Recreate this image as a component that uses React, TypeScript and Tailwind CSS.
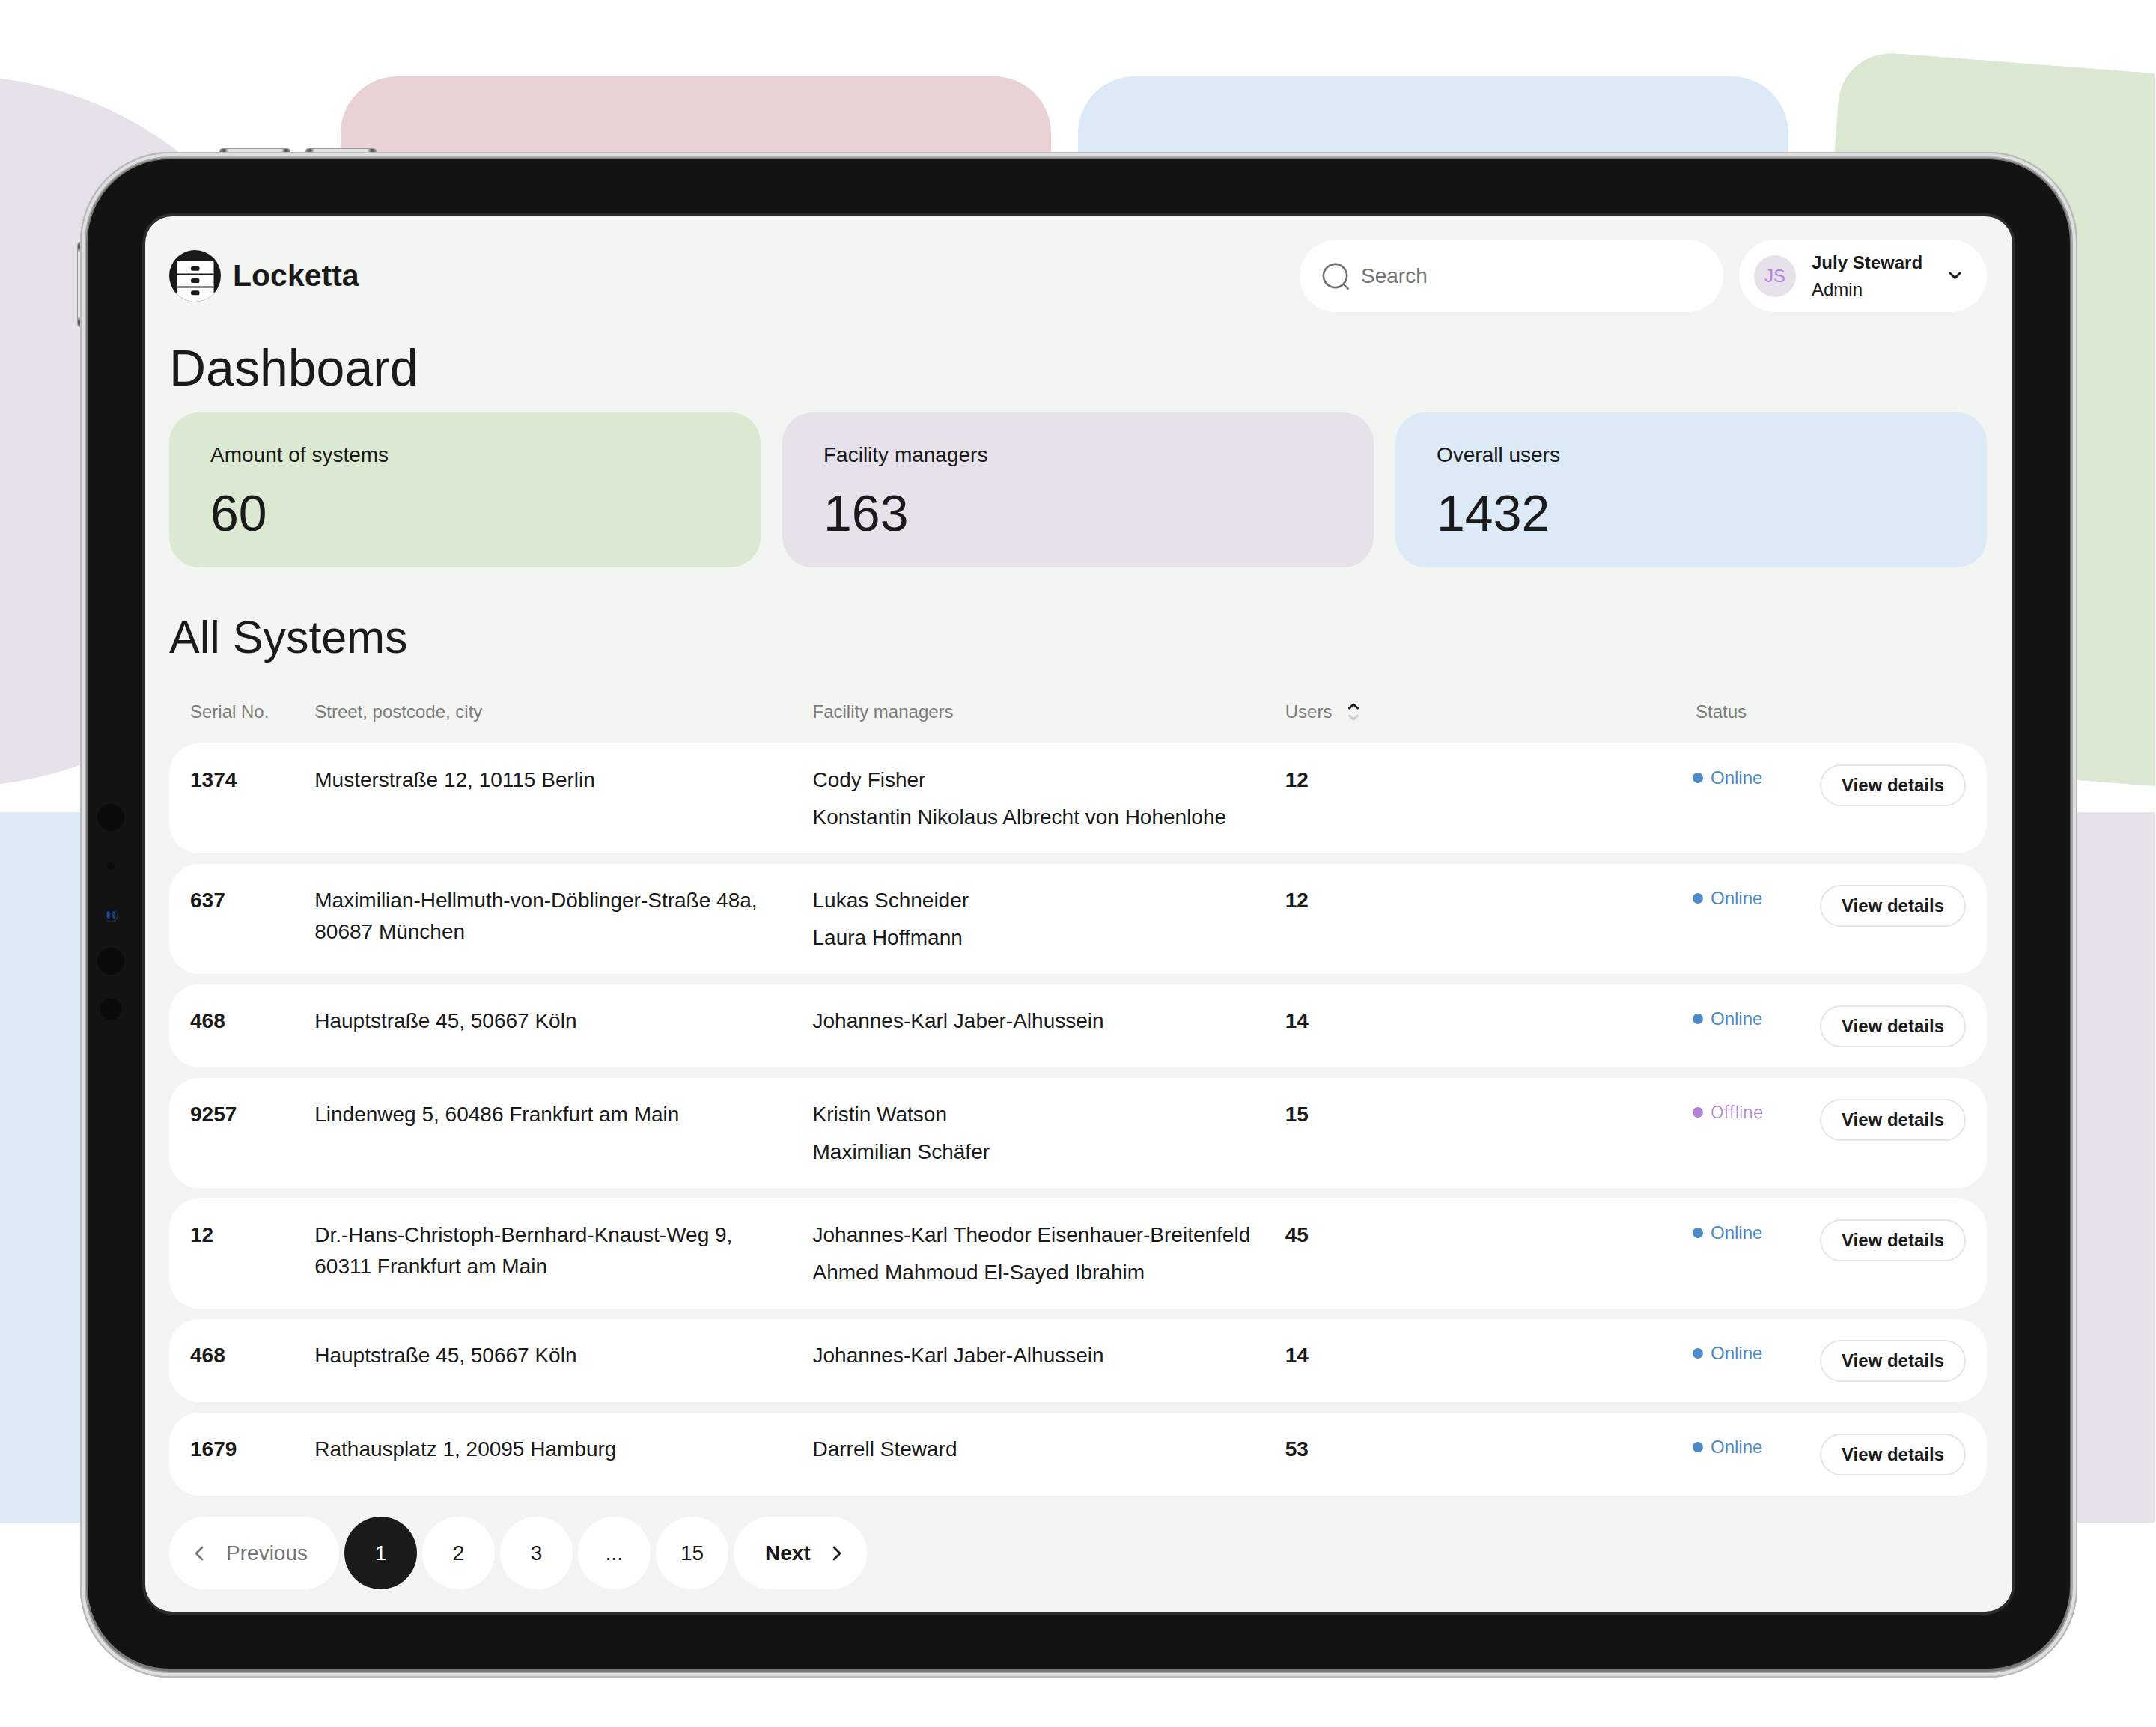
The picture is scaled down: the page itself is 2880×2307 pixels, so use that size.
import React from 'react';
import clsx from 'clsx';

interface StatProps {
  label: string;
  value: number;
  tone: string;
}

interface SystemProps {
  serial: number;
  address: string;
  managers: string[];
  users: number;
  status: 'Online' | 'Offline';
}

const stats: StatProps[] = [
  { label: 'Amount of systems', value: 60, tone: 'bg-[#dbe9d2]' },
  { label: 'Facility managers', value: 163, tone: 'bg-[#e7e1eb]' },
  { label: 'Overall users', value: 1432, tone: 'bg-[#dceaf7]' },
];

const systems: SystemProps[] = [
  { serial: 1374, address: 'Musterstraße 12, 10115 Berlin', managers: ['Cody Fisher', 'Konstantin Nikolaus Albrecht von Hohenlohe'], users: 12, status: 'Online' },
  { serial: 637, address: 'Maximilian-Hellmuth-von-Döblinger-Straße 48a, 80687 München', managers: ['Lukas Schneider', 'Laura Hoffmann'], users: 12, status: 'Online' },
  { serial: 468, address: 'Hauptstraße 45, 50667 Köln', managers: ['Johannes-Karl Jaber-Alhussein'], users: 14, status: 'Online' },
  { serial: 9257, address: 'Lindenweg 5, 60486 Frankfurt am Main', managers: ['Kristin Watson', 'Maximilian Schäfer'], users: 15, status: 'Offline' },
  { serial: 12, address: 'Dr.-Hans-Christoph-Bernhard-Knaust-Weg 9, 60311 Frankfurt am Main', managers: ['Johannes-Karl Theodor Eisenhauer-Breitenfeld', 'Ahmed Mahmoud El-Sayed Ibrahim'], users: 45, status: 'Online' },
  { serial: 468, address: 'Hauptstraße 45, 50667 Köln', managers: ['Johannes-Karl Jaber-Alhussein'], users: 14, status: 'Online' },
  { serial: 1679, address: 'Rathausplatz 1, 20095 Hamburg', managers: ['Darrell Steward'], users: 53, status: 'Online' },
];

const pages = ['1', '2', '3', '...', '15'];

const Logo: React.FC = () => (
  <svg className="size-[69px]" viewBox="0 0 69 69" aria-hidden="true">
    <defs>
      <clipPath id="logo-clip">
        <circle cx="34.5" cy="34.5" r="34.5" />
      </clipPath>
    </defs>
    <g clipPath="url(#logo-clip)">
      <rect width="69" height="69" fill="#191a19" />
      <rect x="10" y="14" width="49.5" height="60" rx="3" fill="#fff" />
      <path d="M10 32.6h49.5M10 49.4h49.5" stroke="#191a19" strokeWidth="2" />
      <rect x="29" y="21.7" width="11.5" height="6" rx="2.5" fill="#191a19" />
      <rect x="29" y="38" width="11.5" height="6" rx="2.5" fill="#191a19" />
      <rect x="29" y="54.3" width="11.5" height="6" rx="2.5" fill="#191a19" />
    </g>
  </svg>
);

const Backdrop: React.FC = () => (
  <div className="absolute inset-y-0 left-0 right-0.5 overflow-hidden" aria-hidden="true">
    <div className="absolute left-[-528px] top-[102px] size-[948px] rounded-full bg-[#e7e1eb]" />
    <div className="absolute left-[455px] top-[102px] size-[949px] rounded-[76px] bg-[#e9d2d4]" />
    <div className="absolute left-[1440px] top-[102px] size-[949px] rounded-[76px] bg-[#dceaf7]" />
    <div className="absolute left-[2461px] top-[66px] size-[949px] origin-top-left rotate-[4.4deg] rounded-[70px] bg-[#dbe9d2]" />
    <div className="absolute left-0 top-[1085px] h-[949px] w-[420px] bg-[#dceaf7]" />
    <div className="absolute right-0 top-[1085px] h-[949px] w-[420px] bg-[#e7e1eb]" />
  </div>
);

const Cameras: React.FC = () => (
  <svg className="h-[300px] w-10" viewBox="0 0 40 300">
    <circle cx="20" cy="20" r="18" fill="#0a0a0a" />
    <circle cx="20" cy="85" r="5" fill="#0b0b0b" />
    <circle cx="21" cy="151" r="9" fill="#2b2d31" />
    <circle cx="20" cy="150" r="8.5" fill="#0a1020" />
    <ellipse cx="16.5" cy="150" rx="2.5" ry="5" fill="#1f4478" />
    <ellipse cx="24" cy="150" rx="2.5" ry="5" fill="#1b3b6b" />
    <circle cx="20" cy="212" r="18" fill="#0a0a0a" />
    <circle cx="20" cy="276" r="14" fill="#0a0a0a" />
  </svg>
);

const Header: React.FC = () => (
  <header className="flex items-center justify-between">
    <a href="#" className="flex items-center gap-4 text-[41px] font-bold">
      <Logo />
      Locketta
    </a>
    <div className="flex gap-[21px]">
      <div className="flex h-[97px] w-[566px] items-center gap-4 rounded-full bg-white pl-[30px]">
        <label htmlFor="search" aria-label="Search">
          <svg className="size-9" viewBox="0 0 36 36" fill="none" stroke="#6f706f" strokeWidth="2.6" strokeLinecap="round">
            <circle cx="17.5" cy="17.5" r="15.6" />
            <path d="M28.6 28.6l6 6" />
          </svg>
        </label>
        <input id="search" type="search" placeholder="Search" className="h-[60px] w-[420px] bg-transparent text-[28px] outline-none placeholder:text-[#757575]" />
      </div>
      <button className="flex h-[97px] w-[331px] items-center rounded-full bg-white pl-5 pr-[34px] text-left text-2xl leading-9">
        <span className="flex size-14 items-center justify-center rounded-full bg-[#e7e1eb] text-[#b583dc]">JS</span>
        <span className="ml-[21px] flex-1">
          <span className="block font-bold">July Steward</span>
          <span className="block">Admin</span>
        </span>
        <svg className="h-[11px] w-[17px]" viewBox="0 0 17 11" fill="none" stroke="#191a19" strokeWidth="3" strokeLinecap="round" strokeLinejoin="round">
          <path d="M2 2l6.5 6.5L15 2" />
        </svg>
      </button>
    </div>
  </header>
);

const StatCard: React.FC<StatProps> = ({ label, value, tone }) => (
  <div className={clsx('rounded-[40px] px-[55px] pt-9 pb-[33px]', tone)}>
    <div className="text-[28px] leading-[42px]">{label}</div>
    <div className="mt-4 text-[68px] leading-[80px]">{value}</div>
  </div>
);

const SystemRow: React.FC<SystemProps> = ({ serial, address, managers, users, status }) => (
  <tr className="align-top text-[28px] leading-[42px] *:bg-white *:pt-7 *:pb-[27px]">
    <td className="rounded-l-[40px] pl-7 font-bold">{serial}</td>
    <td className="pr-12">{address}</td>
    <td>
      <div className="flex flex-col gap-2">
        {managers.map((name) => (
          <span key={name}>{name}</span>
        ))}
      </div>
    </td>
    <td className="font-bold">{users}</td>
    <td>
      <div className={clsx('flex items-center gap-2.5 leading-9', status === 'Online' ? 'text-2xl text-[#4d8ac9]' : "font-['Inter'] text-[23px] font-light text-[#b27fdb]")}>
        <span className="size-3.5 rounded-full bg-current" />
        {status}
      </div>
    </td>
    <td className="rounded-r-[40px] pr-7">
      <button className="block h-14 w-full rounded-full border-2 border-[#e6e6e6] text-2xl font-bold">View details</button>
    </td>
  </tr>
);

const SystemsTable: React.FC = () => (
  <table className="mt-8 w-full table-fixed border-separate border-spacing-x-0 border-spacing-y-[14px]">
    <colgroup>
      <col className="w-[8%]" />
      <col className="w-[27.4%]" />
      <col className="w-[26%]" />
      <col />
      <col className="w-[170px]" />
      <col className="w-[223px]" />
    </colgroup>
    <thead>
      <tr className="text-left text-2xl leading-9 text-[#7c7d7b] *:pb-2.5 *:font-normal">
        <th className="pl-7">Serial No.</th>
        <th>Street, postcode, city</th>
        <th>Facility managers</th>
        <th>
          <button className="flex items-center gap-[21px]">
            Users
            <svg className="h-6 w-4" viewBox="0 0 16 24" fill="none" strokeWidth="3" strokeLinecap="round" strokeLinejoin="round">
              <path d="M2.5 7L8 2l5.5 5" stroke="#191a19" />
              <path d="M2.5 17L8 22l5.5-5" stroke="#c9cbc8" />
            </svg>
          </button>
        </th>
        <th className="pl-1">Status</th>
        <th />
      </tr>
    </thead>
    <tbody>
      {systems.map((system, index) => (
        <SystemRow key={index} {...system} />
      ))}
    </tbody>
  </table>
);

const Pagination: React.FC = () => (
  <nav className="mt-3.5 flex gap-[7px] text-[28px]">
    <button className="flex h-[97px] w-[227px] items-center justify-between rounded-full bg-white pl-[34px] pr-[42px] text-[#757575]">
      <svg className="h-5 w-3" viewBox="0 0 12 20" fill="none" stroke="currentColor" strokeWidth="2.8" strokeLinecap="round" strokeLinejoin="round">
        <path d="M10 2l-8 8 8 8" />
      </svg>
      Previous
    </button>
    {pages.map((page) => (
      <button key={page} className={clsx('size-[97px] rounded-full', page === '1' ? 'bg-[#191a19] text-white' : 'bg-white')}>
        {page}
      </button>
    ))}
    <button className="flex h-[97px] w-[178px] items-center justify-between rounded-full bg-white pl-[42px] pr-[34px] font-bold">
      Next
      <svg className="h-5 w-3" viewBox="0 0 12 20" fill="none" stroke="currentColor" strokeWidth="2.8" strokeLinecap="round" strokeLinejoin="round">
        <path d="M2 2l8 8-8 8" />
      </svg>
    </button>
  </nav>
);

const App: React.FC = () => {
  return (
    <div className="relative bg-white pl-[107px] pr-[105px] pt-[203px] pb-[67px] font-['Liberation_Sans',Arial,sans-serif] text-[#191a19]">
      <Backdrop />
      <div className="relative">
        {/* hardware keys */}
        <div className="absolute left-[186px] top-[-5px] h-3 w-[95px] rounded-sm border border-[#9a9a9a] bg-[linear-gradient(90deg,#8a8a8a,#555_6%,#e4e4e4_12%,#e4e4e4_88%,#555_94%,#8a8a8a)]" />
        <div className="absolute left-[301px] top-[-5px] h-3 w-[95px] rounded-sm border border-[#9a9a9a] bg-[linear-gradient(90deg,#8a8a8a,#555_6%,#e4e4e4_12%,#e4e4e4_88%,#555_94%,#8a8a8a)]" />
        <div className="absolute left-[-4px] top-[120px] h-[114px] w-3 rounded-sm border border-[#9a9a9a] bg-[linear-gradient(180deg,#8a8a8a,#555_6%,#e4e4e4_12%,#e4e4e4_88%,#555_94%,#8a8a8a)]" />
        <div className="relative rounded-[120px] bg-[#777] px-2.5 pt-2.5 pb-3 shadow-[inset_0_0_0_2px_#b9b9b9,inset_0_0_0_6px_#e0e0e0,inset_0_0_0_8px_#a8a8a8]">
          <div className="rounded-[110px] bg-[#131313] px-[77px] py-[76px]">
            <div className="absolute inset-y-0 left-[21px] flex items-center">
              <Cameras />
            </div>
            <main className="rounded-[36px] bg-[#f3f5f2] pl-8 pr-[34px] pt-[31px] pb-[30px] shadow-[0_0_0_4px_#2c2c2c]">
              <Header />
              <h1 className="mt-[34px] text-[68px] leading-[80px]">Dashboard</h1>
              <section className="mt-5 grid grid-cols-3 gap-[29px]">
                {stats.map((stat) => (
                  <StatCard key={stat.label} {...stat} />
                ))}
              </section>
              <h2 className="mt-[57px] text-[61px] leading-[72px]">All Systems</h2>
              <SystemsTable />
              <Pagination />
            </main>
          </div>
        </div>
      </div>
    </div>
  );
};

export default App;
